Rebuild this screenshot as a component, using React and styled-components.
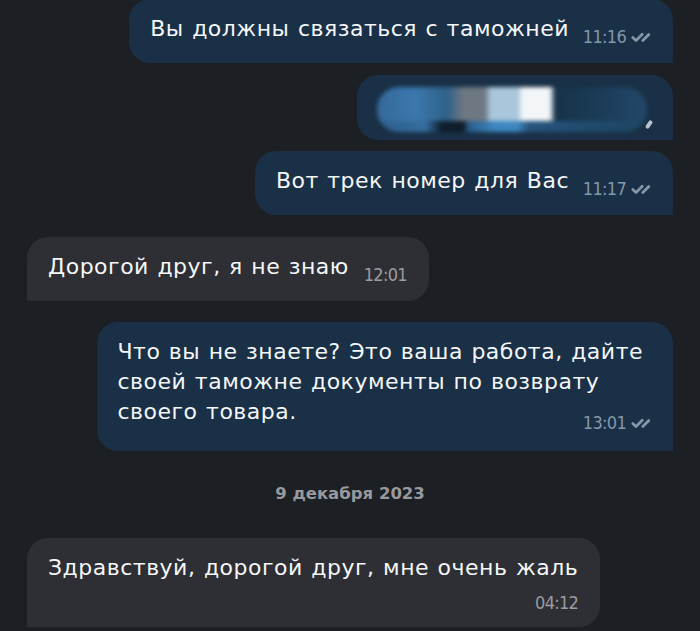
import React from 'react';
import styled, { createGlobalStyle } from 'styled-components';

const GlobalStyle = createGlobalStyle`
  html, body {
    margin: 0;
    padding: 0;
    background: #1c1f24;
  }
`;

const Chat = styled.div`
  width: 700px;
  height: 631px;
  overflow: hidden;
  box-sizing: border-box;
  padding: 0 27px;
  display: flex;
  flex-direction: column;
  font-family: "DejaVu Sans", "Noto Sans", sans-serif;
`;

const Row = styled.div`
  display: flex;
  justify-content: ${p => (p.$out ? 'flex-end' : 'flex-start')};
  margin-top: ${p => p.$gap || 0}px;
`;

const Bubble = styled.div`
  position: relative;
  box-sizing: border-box;
  max-width: 584px;
  padding: 15px ${p => p.$pr || 22}px ${p => p.$pb || 19}px 21px;
  border-radius: ${p => (p.$out ? '21px 21px 0 21px' : '21px 21px 21px 0')};
  background: ${p => (p.$out ? '#1a3046' : '#2e2f34')};
  color: #f4f6f8;
  font-size: 22px;
  line-height: 30px;
  letter-spacing: 0.5px;
  word-spacing: 1px;
`;

const Spacer = styled.span`
  display: ${p => (p.$block ? 'block' : 'inline-block')};
  width: ${p => (p.$block ? 'auto' : `${p.$w}px`)};
  height: ${p => (p.$block ? '30px' : '1px')};
`;

const Meta = styled.span`
  position: absolute;
  right: 22px;
  bottom: ${p => p.$bottom || 17}px;
  display: flex;
  align-items: center;
  gap: 5px;
  height: 18px;
  font-family: "DejaVu Sans Condensed", "Liberation Sans Narrow", sans-serif;
  font-stretch: condensed;
  font-size: 18px;
  line-height: 18px;
  letter-spacing: -0.7px;
  color: ${p => (p.$out ? '#8497a8' : '#9b9ca0')};
`;

const MediaBubble = styled.div`
  position: relative;
  width: 316px;
  height: 65px;
  box-sizing: border-box;
  padding: 12px 26px 8px 20px;
  border-radius: 21px 21px 0 21px;
  background: #1a3046;
`;

const Blur = styled.div`
  height: 45px;
  border-radius: 22px;
  overflow: hidden;
  display: flex;
  flex-direction: column;
  filter: blur(2px);
`;

const BlurRow = styled.div`
  flex: ${p => p.$flex};
  background: ${p => p.$bg};
`;

const Tick = styled.span`
  position: absolute;
  right: 22px;
  top: 45px;
  width: 4px;
  height: 9px;
  background: #b8c2cc;
  border-radius: 2px;
  transform: rotate(35deg);
`;

const DateLabel = styled.div`
  text-align: center;
  margin-top: 33px;
  font-family: "DejaVu Sans", sans-serif;
  font-weight: 700;
  font-size: 16.5px;
  line-height: 20px;
  color: #97999d;
`;

const Checks = () => (
  <svg width="20" height="12" viewBox="0 0 20 12" fill="none">
    <path d="M1.8 6.6 L5 9.6 L11.2 3.2" stroke="currentColor" strokeWidth="2.8" strokeLinecap="round" strokeLinejoin="round" />
    <path d="M11.8 9.6 L17.8 3.6" stroke="currentColor" strokeWidth="2.8" strokeLinecap="round" />
  </svg>
);

const topRow = `linear-gradient(90deg,
  #36689a 0%, #3b78ad 14%, #2f6189 26%, #6d7882 32%, #6d7882 40%,
  #a9c6da 42%, #a9c6da 52%, #f3f6f9 54%, #f3f6f9 64%,
  #173248 66%, #1a3a55 80%, #22486a 100%)`;

const bottomRow = `linear-gradient(90deg,
  #2e5f8e 0%, #356e9f 18%, #0f1d2b 24%, #0f1d2b 32%, #2a5f8a 34%,
  #3d87c2 44%, #3d87c2 52%, #27557c 56%, #1f4a6d 80%, #1f4663 100%)`;

const Message = ({ out, gap, lines, time, spacer, read, pb, pr, metaBottom, metaLine }) => (
  <Row $out={out} $gap={gap}>
    <Bubble $out={out} $pb={pb} $pr={pr}>
      {lines.map((l, i) => (
        <React.Fragment key={i}>
          {i > 0 && <br />}
          {l}
        </React.Fragment>
      ))}
      <Spacer $w={spacer} $block={metaLine} />
      <Meta $out={out} $bottom={metaBottom}>
        {time}
        {read && <Checks />}
      </Meta>
    </Bubble>
  </Row>
);

const App = () => (
  <>
    <GlobalStyle />
    <Chat>
      <Message out gap={-1} lines={['Вы должны связаться с таможней']} time="11:16" spacer={82} read />
      <Row $out $gap={12}>
        <MediaBubble>
          <Blur>
            <BlurRow $flex={3} $bg={topRow} />
            <BlurRow $flex={1} $bg={bottomRow} />
          </Blur>
          <Tick />
        </MediaBubble>
      </Row>
      <Message out gap={11} lines={['Вот трек номер для Вас']} time="11:17" spacer={82} read />
      <Message gap={22} lines={['Дорогой друг, я не знаю']} time="12:01" spacer={58} />
      <Message
        out
        gap={21}
        lines={[
          'Что вы не знаете? Это ваша работа, дайте',
          'своей таможне документы по возврату',
          'своего товара.',
        ]}
        time="13:01"
        spacer={80}
        read
        pb={24}
        pr={30}
        metaBottom={19}
      />
      <DateLabel>9 декабря 2023</DateLabel>
      <Message
        gap={34}
        lines={['Здравствуй, дорогой друг, мне очень жаль']}
        time="04:12"
        metaLine
        pb={14}
        metaBottom={15}
      />
    </Chat>
  </>
);

export default App;
